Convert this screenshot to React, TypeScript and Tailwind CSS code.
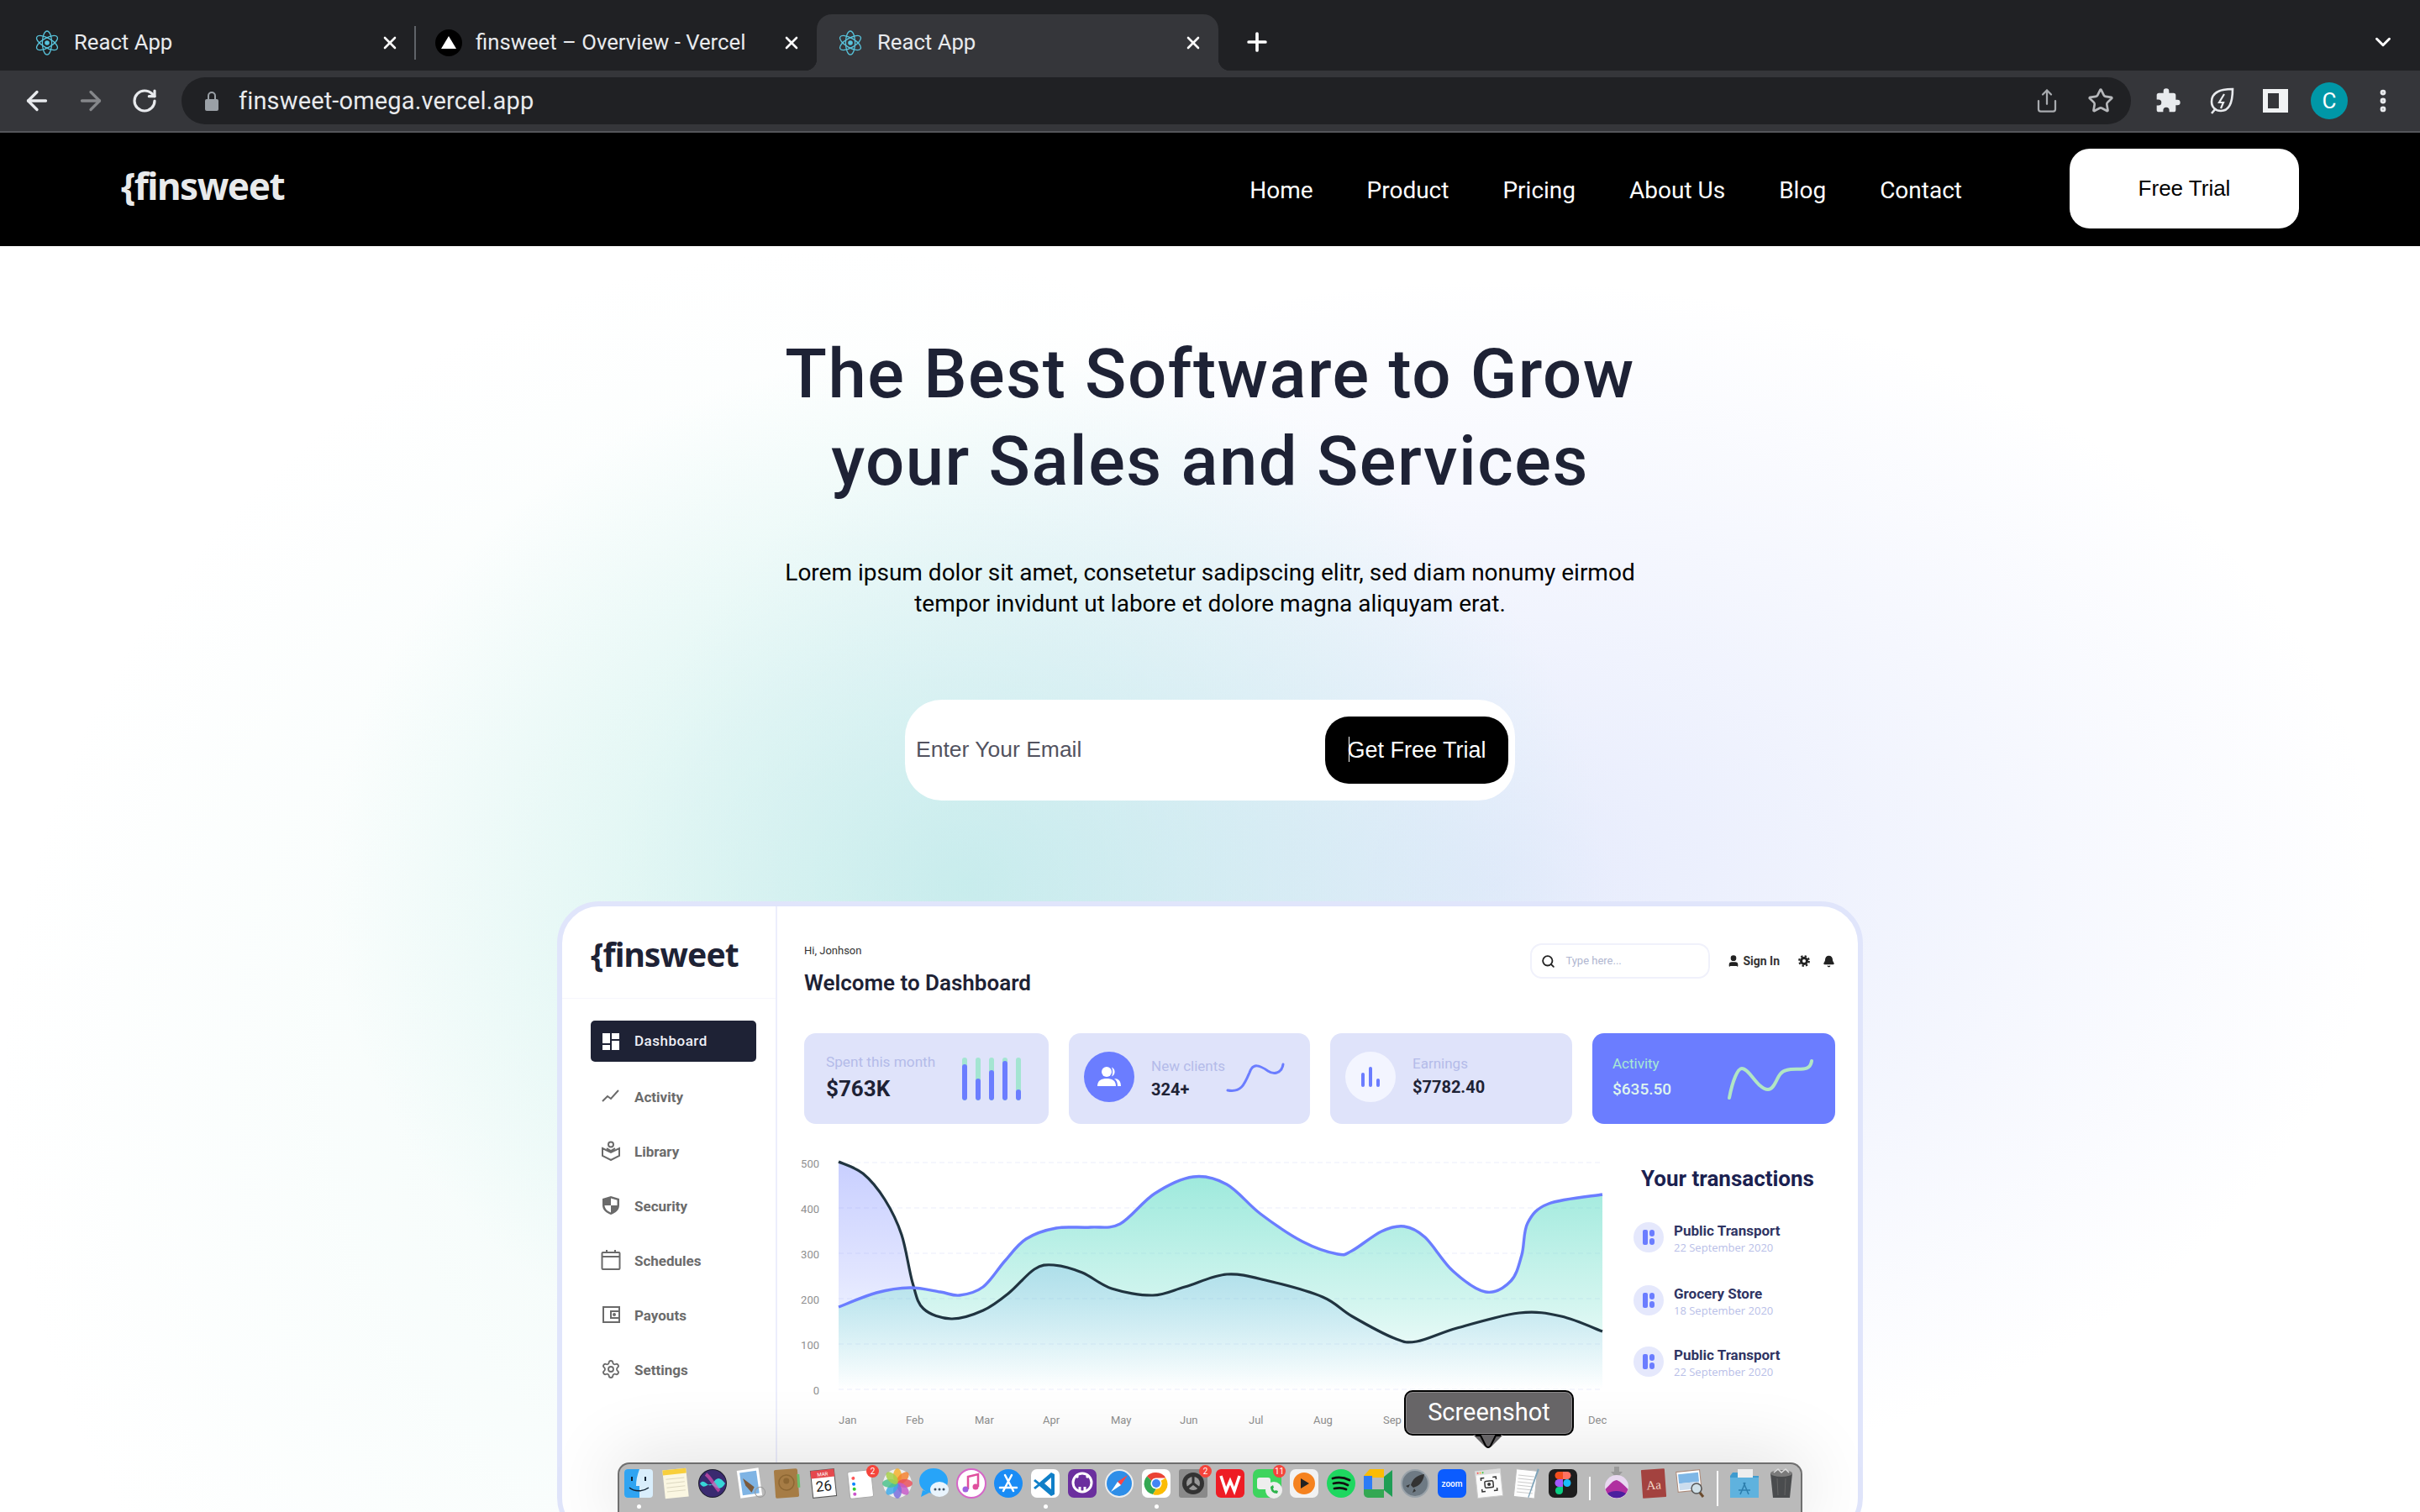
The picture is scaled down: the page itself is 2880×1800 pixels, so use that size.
import React from 'react';
import { ArrowLeft, ArrowRight, RotateCw, Share, Star, X, Plus, ChevronDown, MoreVertical, Search, Settings, Bell, User } from 'lucide-react';

// catmull-rom through the traced chart points
type Pt = [number, number];
const smooth = (pts: Pt[]) => {
  let d = `M${pts[0][0]} ${pts[0][1]}`;
  for (let i = 0; i < pts.length - 1; i++) {
    const p0 = pts[i - 1] || pts[i];
    const p1 = pts[i];
    const p2 = pts[i + 1];
    const p3 = pts[i + 2] || p2;
    d += ` C${p1[0] + (p2[0] - p0[0]) / 6} ${p1[1] + (p2[1] - p0[1]) / 6} ${p2[0] - (p3[0] - p1[0]) / 6} ${p2[1] - (p3[1] - p1[1]) / 6} ${p2[0]} ${p2[1]}`;
  }
  return d;
};

const bluePts: Pt[] = [[998,1556],[1043,1539],[1083,1533],[1119,1538],[1142,1542],[1170,1532],[1196,1501],[1221,1475],[1257,1462],[1298,1461],[1333,1457],[1374,1421],[1420,1401],[1460,1410],[1500,1445],[1550,1478],[1592,1493],[1609,1489],[1644,1466],[1671,1460],[1696,1473],[1729,1513],[1768,1538],[1798,1525],[1811,1494],[1818,1456],[1843,1433],[1907,1422]];
const darkPts: Pt[] = [[998,1383],[1027,1397],[1053,1428],[1073,1470],[1086,1527],[1099,1558],[1132,1570],[1170,1560],[1201,1539],[1231,1511],[1254,1506],[1288,1515],[1323,1534],[1372,1542],[1410,1532],[1460,1517],[1510,1525],[1574,1544],[1609,1567],[1659,1593],[1686,1597],[1734,1581],[1808,1563],[1858,1567],[1907,1585]];

const ReactIcon = () => (
  <svg width="32" height="32" viewBox="-16 -16 32 32" fill="none" stroke="#58c4dc" strokeWidth="1.3">
    <ellipse rx="14" ry="5.6" transform="rotate(90)" />
    <ellipse rx="14" ry="5.6" transform="rotate(30)" />
    <ellipse rx="14" ry="5.6" transform="rotate(150)" />
    <circle r="2.8" fill="#58c4dc" stroke="none" />
  </svg>
);

const VercelIcon = () => (
  <svg width="32" height="32" viewBox="0 0 32 32">
    <circle cx="16" cy="16" r="16" fill="#000" />
    <path d="M16 8l9 15H7z" fill="#fff" />
  </svg>
);

const Tab = ({ title, icon, active }: { title: string; icon: React.ReactNode; active?: boolean }) => (
  <div className={`relative flex h-[67px] w-[478px] items-center pl-[24px] pr-[18px] ${active ? 'rounded-t-[18px] bg-[#35363a]' : ''}`}>
    {active && (
      <>
        <div className="absolute -left-[14px] bottom-0 h-[14px] w-[14px] bg-[radial-gradient(circle_at_0_0,#202124_14px,#35363a_14.5px)]" />
        <div className="absolute -right-[14px] bottom-0 h-[14px] w-[14px] bg-[radial-gradient(circle_at_100%_0,#202124_14px,#35363a_14.5px)]" />
      </>
    )}
    {icon}
    <span className="ml-[16px] flex-1 text-[25.7px] text-[#e8eaed]">{title}</span>
    <X size={24} strokeWidth={2.6} className="text-white" />
  </div>
);

const ChromeBar = () => (
  <div className="font-['Roboto',sans-serif]">
    <div className="flex h-[84px] items-end bg-[#202124] pl-[16px]">
      <Tab title="React App" icon={<ReactIcon />} />
      <div className="-mx-[1px] mb-[13px] h-[40px] w-[2px] bg-[#5f6368]" />
      <Tab title="finsweet – Overview - Vercel" icon={<VercelIcon />} />
      <Tab title="React App" icon={<ReactIcon />} active />
      <Plus size={34} strokeWidth={2.6} className="mb-[17px] ml-[29px] text-white" />
      <ChevronDown size={30} strokeWidth={2.4} className="mb-[19px] ml-auto mr-[29px] text-white" />
    </div>
    <div className="flex h-[74px] items-start border-b-2 border-[#55565a] bg-[#35363a] pt-[8px]">
      <div className="flex h-[56px] w-[216px] items-center gap-[28px] pl-[26px]">
        <ArrowLeft size={36} strokeWidth={2.2} className="text-[#e8eaed]" />
        <ArrowRight size={36} strokeWidth={2.2} className="text-[#85878a]" />
        <RotateCw size={32} strokeWidth={2.4} className="ml-[2px] text-[#e8eaed]" />
      </div>
      <div className="flex h-[56px] w-[2320px] items-center rounded-full bg-[#202124] pl-[28px] pr-[20px]">
        <svg width="16" height="24" viewBox="0 0 16 24">
          <path d="M4 10V6a4 4 0 0 1 8 0v4" fill="none" stroke="#9aa0a6" strokeWidth="2" />
          <rect x="0" y="10" width="16" height="14" rx="2" fill="#9aa0a6" />
        </svg>
        <span className="ml-[24px] mt-[2px] text-[29px] tracking-[0.15px] text-[#e8eaed]">finsweet-omega.vercel.app</span>
        <Share size={30} strokeWidth={1.8} className="ml-auto mr-[33px] text-[#a8abaf]" />
        <Star size={32} strokeWidth={2} className="text-[#b6b8bb]" />
      </div>
      <div className="flex h-[56px] items-center pl-[12px]">
        <div className="flex w-[64px] justify-center">
          <svg width="32" height="32" viewBox="0 0 24 24" fill="#e8eaed">
            <path d="M20.5 11H19V7a2 2 0 0 0-2-2h-4V3.500a2.500 2.500 0 0 0-5 0V5H4a2 2 0 0 0-2 2v3.800h1.500a2.700 2.700 0 0 1 0 5.400H2V20a2 2 0 0 0 2 2h3.800v-1.500a2.700 2.700 0 0 1 5.400 0V22H17a2 2 0 0 0 2-2v-4h1.500a2.500 2.500 0 0 0 0-5z" />
          </svg>
        </div>
        <div className="flex w-[64px] justify-center">
          <svg width="32" height="34" viewBox="0 0 32 34" fill="none" stroke="#e8eaed" strokeWidth="2.6">
            <path d="M29 3C16 3 4 6 4 18c0 7 5 11 11 11 10 0 14-10 14-26z" />
            <path d="M4 32l5-6" />
            <path d="M19 9l-6 10h5l-3 7" strokeWidth="2.2" />
          </svg>
        </div>
        <div className="flex w-[64px] justify-center">
          <svg width="30" height="28" viewBox="0 0 30 28">
            <rect width="30" height="28" fill="#f1f3f4" />
            <rect x="6" y="5" width="13" height="18" fill="#35363a" />
          </svg>
        </div>
        <div className="flex w-[64px] justify-center">
          <div className="flex h-[44px] w-[44px] items-center justify-center rounded-full bg-[#0097a7] text-[26px] text-white">C</div>
        </div>
        <div className="flex w-[64px] justify-center">
          <MoreVertical size={34} strokeWidth={2.8} className="text-[#e8eaed]" />
        </div>
      </div>
    </div>
  </div>
);

const Header = () => (
  <div className="flex h-[135px] items-center bg-black pl-[144px] pr-[144px]">
    <span className="-mt-[10px] font-['Noto_Sans',sans-serif] text-[44px] font-bold leading-none tracking-[-1.5px] text-[#e8eaeb]">{'{finsweet'}</span>
    <div className="ml-auto mt-[2px] flex gap-[64px] font-['Roboto',sans-serif] text-[28px] text-white">
      <a>Home</a>
      <a>Product</a>
      <a>Pricing</a>
      <a>About Us</a>
      <a>Blog</a>
      <a>Contact</a>
    </div>
    <button className="-mt-[2px] ml-[128px] h-[95px] w-[273px] rounded-[24px] bg-white font-['Liberation_Sans',sans-serif] text-[26px] text-black">Free Trial</button>
  </div>
);

const Hero = () => (
  <div className="flex flex-col items-center">
    <h1 className="mt-[100px] text-center font-['Roboto',sans-serif] text-[81.5px] font-medium leading-[104px] tracking-[1.5px] text-[#1e2235]">
      The Best Software to Grow
      <br />
      your Sales and Services
    </h1>
    <p className="mt-[62px] text-center font-['Roboto',sans-serif] text-[28px] leading-[37px] text-black">
      Lorem ipsum dolor sit amet, consetetur sadipscing elitr, sed diam nonumy eirmod
      <br />
      tempor invidunt ut labore et dolore magna aliquyam erat.
    </p>
    <div className="mt-[96px] flex h-[120px] w-[726px] items-center justify-between rounded-[44px] bg-white pl-[13px] pr-[8px] font-['Liberation_Sans',sans-serif]">
      <span className="text-[26.5px] text-[#53535f]">Enter Your Email</span>
      <button className="relative h-[80px] w-[218px] rounded-[28px] bg-black text-[27px] text-white">
        Get Free Trial
        <span className="absolute left-[28px] top-[24px] h-[30px] w-[1px] bg-white" />
      </button>
    </div>
  </div>
);

const iconCls = '-mt-[4px] h-[24px] w-[24px] shrink-0';
const sideItems: { label: string; icon: React.ReactNode }[] = [
  {
    label: 'Activity',
    icon: (
      <svg className={iconCls} viewBox="0 0 24 24" fill="none" stroke="#6a6a6a" strokeWidth="2">
        <path d="M2 18l6-6 4 3 9-10" />
      </svg>
    ),
  },
  {
    label: 'Library',
    icon: (
      <svg className={iconCls} viewBox="0 0 24 24" fill="none" stroke="#6a6a6a" strokeWidth="2">
        <circle cx="12" cy="4.500" r="3" />
        <path d="M7 9l5 3 5-3M2 9l10 5 10-5v9l-10 5-10-5z" />
      </svg>
    ),
  },
  {
    label: 'Security',
    icon: (
      <svg className={iconCls} viewBox="0 0 24 24">
        <path d="M12 1l10 3v8c0 6-5 9-10 11-5-2-10-5-10-11V4z" fill="#6a6a6a" />
        <path d="M12 3.500l7.500 2.300V12H12zM12 12v8.500C8 19 4.800 16 4.500 12z" fill="#fff" />
      </svg>
    ),
  },
  {
    label: 'Schedules',
    icon: (
      <svg className={iconCls} viewBox="0 0 24 24" fill="none" stroke="#6a6a6a" strokeWidth="2">
        <rect x="1.500" y="3" width="21" height="20" rx="1" />
        <path d="M1.500 8h21M7 0v4M17 0v4" />
      </svg>
    ),
  },
  {
    label: 'Payouts',
    icon: (
      <svg className={iconCls} viewBox="0 0 24 24" fill="none" stroke="#6a6a6a" strokeWidth="2">
        <path d="M22 3H3v18h19z" />
        <path d="M22 8H12v8h10" />
        <circle cx="16" cy="12" r="1" />
      </svg>
    ),
  },
  { label: 'Settings', icon: <Settings size={24} strokeWidth={1.8} className="-mt-[4px] text-[#6a6a6a]" /> },
];

const Sidebar = () => (
  <div className="w-[256px] shrink-0 border-r-2 border-[#eceefc]">
    <div className="flex h-[110px] items-start border-b border-[#f6f6fd] pl-[34px] pt-[37px]">
      <span className="font-['Noto_Sans',sans-serif] text-[39px] font-bold leading-none tracking-[-0.9px] text-[#1e2235]">{'{finsweet'}</span>
    </div>
    <div className="pl-[34px] pt-[26px] font-['Roboto',sans-serif]">
      <div className="mb-[10px] flex h-[49px] w-[197px] items-center rounded-[5px] bg-[#1e2235] pl-[14px] text-[17px] font-medium tracking-[0.5px] text-[#eef0f6]">
        <svg className="h-[20px] w-[20px]" viewBox="0 0 20 20" fill="#fff">
          <rect width="9" height="12" />
          <rect x="11" width="9" height="7" />
          <rect y="14" width="9" height="6" />
          <rect x="11" y="9" width="9" height="11" />
        </svg>
        <span className="ml-[18px]">Dashboard</span>
      </div>
      {sideItems.map((s) => (
        <div key={s.label} className="flex h-[65px] w-[197px] items-center pl-[12px] text-[17px] font-bold text-[#6b6b6b]">
          {s.icon}
          <span className="ml-[16px]">{s.label}</span>
        </div>
      ))}
    </div>
  </div>
);

const bars = [83, 51, 70, 92, 25];

const StatCards = () => (
  <div className="mt-[44px] flex gap-[24px] font-['Roboto',sans-serif]">
    <div className="flex h-[108px] w-[291px] items-center justify-between rounded-[14px] bg-[#dfe3fa] pl-[26px] pr-[33px]">
      <div className="-mt-[4px]">
        <div className="text-[17.2px] leading-[24px] text-[#b4bbe9]">Spent this month</div>
        <div className="mt-[4px] text-[26px] font-bold leading-[32px] text-[#1e2235]">$763K</div>
      </div>
      <div className="flex gap-[10px]">
        {bars.map((h, i) => (
          <div key={i} className="relative h-[51px] w-[6px] overflow-hidden rounded-full bg-[#a4e5d2]">
            <div className="absolute bottom-0 w-full rounded-full bg-[#6b7dff]" style={{ height: `${h}%` }} />
          </div>
        ))}
      </div>
    </div>
    <div className="flex h-[108px] w-[287px] items-center rounded-[14px] bg-[#dfe3fa] pl-[18px]">
      <div className="-mt-[5px] flex h-[60px] w-[60px] items-center justify-center rounded-full bg-[#6b7dff]">
        <svg width="30" height="26" viewBox="0 0 30 26" fill="#fff">
          <circle cx="12" cy="7" r="6" />
          <path d="M1 24c0-7 5-9 11-9s11 2 11 9z" />
          <path d="M18 1.500a6 6 0 0 1 0 11c1.500-3 1.500-8 0-11zM21 15c5 0 8 3 8 9h-4c0-4-1-7-4-9z" />
        </svg>
      </div>
      <div className="ml-[20px]">
        <div className="text-[17px] leading-[24px] text-[#b4bbe9]">New clients</div>
        <div className="mt-[2px] text-[20px] font-bold leading-[28px] text-[#1e2235]">324+</div>
      </div>
      <svg className="ml-[1px]" width="70" height="42" viewBox="0 0 70 42" fill="none" stroke="#6b7dff" strokeWidth="3" strokeLinecap="round">
        <path d="M2 35C18 38 22 28 28 14C32 2 40 5 50 12C56 16 66 16 68 4" />
      </svg>
    </div>
    <div className="flex h-[108px] w-[288px] items-center rounded-[14px] bg-[#dfe3fa] pl-[18px]">
      <div className="-mt-[5px] flex h-[60px] w-[60px] items-center justify-center rounded-full bg-[#f3f5ff]">
        <svg width="22" height="24" viewBox="0 0 22 24" fill="#6b7dff">
          <rect x="0" y="7" width="4" height="17" rx="2" />
          <rect x="9" y="0" width="4" height="24" rx="2" />
          <rect x="18" y="14" width="4" height="10" rx="2" />
        </svg>
      </div>
      <div className="-mt-[7px] ml-[20px]">
        <div className="text-[17px] leading-[24px] text-[#b4bbe9]">Earnings</div>
        <div className="mt-[2px] text-[20px] font-bold leading-[28px] text-[#1e2235]">$7782.40</div>
      </div>
    </div>
    <div className="flex h-[108px] w-[289px] items-center justify-between rounded-[14px] bg-[#6b7dff] pl-[24px] pr-[24px]">
      <div className="-mt-[3px]">
        <div className="text-[17px] leading-[24px] text-[#a7e8d4]">Activity</div>
        <div className="mt-[5px] text-[19px] font-medium leading-[28px] text-[#dff5ee]">$635.50</div>
      </div>
      <svg width="106" height="56" viewBox="0 0 106 56" fill="none" stroke="#b1e6c4" strokeWidth="4" strokeLinecap="round">
        <path d="M4 51C8 30 14 16 19 16C28 16 38 41 50 41C60 41 60 20 72 18C84 14 100 22 102 7" />
      </svg>
    </div>
  </div>
);

const Chart = () => {
  const base = 'L1907 1654 L998 1654 Z';
  const months: [string, number][] = [['Jan', 998], ['Feb', 1078], ['Mar', 1160], ['Apr', 1241], ['May', 1322], ['Jun', 1404], ['Jul', 1486], ['Aug', 1563], ['Sep', 1646], ['Dec', 1890]];
  return (
    <svg width="985" height="340" viewBox="947 1370 985 340" className="-ml-[10px] shrink-0 font-['Roboto',sans-serif]">
      <defs>
        <linearGradient id="fillDark" gradientUnits="userSpaceOnUse" x1="0" y1="1383" x2="0" y2="1654">
          <stop offset="0" stopColor="#6b7dff" stopOpacity="0.37" />
          <stop offset="0.5" stopColor="#6b7dff" stopOpacity="0.2" />
          <stop offset="1" stopColor="#6b9dff" stopOpacity="0" />
        </linearGradient>
        <linearGradient id="fillBlue" gradientUnits="userSpaceOnUse" x1="0" y1="1400" x2="0" y2="1654">
          <stop offset="0" stopColor="#4fd8c0" stopOpacity="0.55" />
          <stop offset="0.6" stopColor="#4fd8c0" stopOpacity="0.25" />
          <stop offset="1" stopColor="#4fd8c0" stopOpacity="0" />
        </linearGradient>
      </defs>
      {[1384, 1438, 1492, 1546, 1600, 1654].map((y, i) => (
        <g key={y}>
          <line x1="998" x2="1907" y1={y} y2={y} stroke="#ebedfb" strokeWidth="1" strokeDasharray="6 4" />
          <text x="975" y={y + 6} textAnchor="end" fontSize="13" fill="#8f8f8f">{500 - i * 100}</text>
        </g>
      ))}
      <path d={`${smooth(darkPts)} ${base}`} fill="url(#fillDark)" />
      <path d={`${smooth(bluePts)} ${base}`} fill="url(#fillBlue)" />
      <path d={smooth(darkPts)} fill="none" stroke="#203440" strokeWidth="3.2" />
      <path d={smooth(bluePts)} fill="none" stroke="#6b7dff" strokeWidth="3.4" />
      {months.map(([m, x]) => (
        <text key={m} x={x} y="1695" fontSize="13" fill="#8f8f8f">{m}</text>
      ))}
    </svg>
  );
};

const txns = [
  { title: 'Public Transport', date: '22 September 2020', mt: 'mt-[34px]' },
  { title: 'Grocery Store', date: '18 September 2020', mt: 'mt-[35px]' },
  { title: 'Public Transport', date: '22 September 2020', mt: 'mt-[33px]' },
];

const Transactions = () => (
  <div className="ml-[12px] font-['Roboto',sans-serif]">
    <div className="ml-[9px] mt-[17px] text-[26px] font-bold leading-[32px] text-[#1b2150]">Your transactions</div>
    {txns.map((t, i) => (
      <div key={i} className={`flex h-[40px] items-center ${t.mt}`}>
        <div className="flex h-[36px] w-[36px] items-center justify-center rounded-full bg-[#e5e8fc]">
          <svg width="14" height="18" viewBox="0 0 14 18" fill="#6b7dff">
            <rect width="6" height="18" rx="2" />
            <rect x="8" width="6" height="8" rx="3" />
            <rect x="8" y="10" width="6" height="8" rx="3" />
          </svg>
        </div>
        <div className="ml-[12px] pt-[3px]">
          <div className="text-[17px] font-bold leading-[20px] text-[#2f3463]">{t.title}</div>
          <div className="font-['Open_Sans',sans-serif] text-[13px] leading-[20px] text-[#b9c0e8]">{t.date}</div>
        </div>
      </div>
    ))}
  </div>
);

const DashboardMock = () => (
  <div className="mt-[120px] h-[760px] w-[1554px] shrink-0 self-center rounded-[50px] border-[6px] border-[#e0e5fb] bg-white">
    <div className="flex h-full">
      <Sidebar />
      <div className="flex-1 pl-[32px] pr-[27px] pt-[44px]">
        <div className="flex items-start justify-between font-['Roboto',sans-serif]">
          <div>
            <div className="text-[13px] leading-[18px] text-[#333]">Hi, Jonhson</div>
            <div className="mt-[13px] text-[26px] font-semibold leading-[32px] text-[#1e2235]">Welcome to Dashboard</div>
          </div>
          <div className="flex items-center">
            <div className="flex h-[42px] w-[214px] items-center rounded-[14px] border-2 border-[#f0f1fb] pl-[11px]">
              <Search size={17} strokeWidth={2.6} className="text-[#222]" />
              <span className="ml-[12px] text-[13px] text-[#b0b6d0]">Type here...</span>
            </div>
            <User size={16} fill="#222" className="ml-[20px] text-[#222]" />
            <span className="ml-[3px] text-[14px] font-bold text-[#333]">Sign In</span>
            <svg className="ml-[22px]" width="14" height="14" viewBox="0 0 14 14" fill="none" stroke="#222">
              <circle cx="7" cy="7" r="3.500" strokeWidth="3" />
              <circle cx="7" cy="7" r="5.800" strokeWidth="2.200" strokeDasharray="2.300 2.250" />
            </svg>
            <Bell size={15} fill="#222" className="ml-[15px] text-[#222]" />
          </div>
        </div>
        <StatCards />
        <div className="mt-[32px] flex">
          <Chart />
          <Transactions />
        </div>
      </div>
    </div>
  </div>
);

// dock tile drawings, all on a 40x40 box
const dockIcons: { key: string; dot?: boolean; badge?: string; el: React.ReactNode }[] = [
  { key: 'finder', dot: true, el: <><rect x="3" y="3" width="34" height="34" rx="4" fill="#d9eefc" /><path d="M3 7a4 4 0 0 1 4-4h14c-3 8-4 14-4 20h4v14H7a4 4 0 0 1-4-4z" fill="#2fa4f2" /><path d="M9 25c6 5 16 5 23 0" fill="none" stroke="#123" strokeWidth="1.500" /><path d="M12 12v5M28 12v5" stroke="#123" strokeWidth="2" /></> },
  { key: 'notes', el: <g transform="rotate(-6 20 20)"><rect x="6" y="3" width="28" height="34" fill="#fbf7e2" /><rect x="6" y="3" width="28" height="6" fill="#f8cf3c" /><path d="M9 14h22M9 19h22M9 24h22M9 29h22" stroke="#ddd8c0" /></g> },
  { key: 'siri', el: <><circle cx="20" cy="20" r="17" fill="#1c1c2c" /><circle cx="20" cy="20" r="16" fill="#3a2a70" /><path d="M5 20c6-8 10 8 15 0s9-8 15 0c-5 9-10 6-15 2s-10 7-15-2z" fill="#37d6d8" /><path d="M12 9c6 4 10 14 16 20" stroke="#e04fb0" strokeWidth="4" opacity=".7" /></> },
  { key: 'mail', el: <g transform="rotate(-8 20 20)"><rect x="7" y="3" width="26" height="33" fill="#fff" /><rect x="10" y="6" width="20" height="27" fill="#7fb4e4" /><path d="M13 13l12 12-4 6-6-9z" fill="#7b5a3c" /><circle cx="31" cy="32" r="6" fill="none" stroke="#999" /></g> },
  { key: 'contacts', el: <g transform="rotate(-4 20 20)"><rect x="6" y="3" width="28" height="34" rx="2" fill="#a67c45" /><rect x="33" y="10" width="3" height="16" fill="#6bbf6b" /><circle cx="20" cy="19" r="9" fill="none" stroke="#8d6733" strokeWidth="1.500" /><circle cx="20" cy="17" r="3.500" fill="#8d6733" /></g> },
  { key: 'calendar', el: <g transform="rotate(-6 20 20)"><rect x="6" y="4" width="28" height="32" fill="#fff" stroke="#555" /><rect x="6" y="4" width="28" height="9" fill="#e5484d" /><text x="20" y="11" textAnchor="middle" fontSize="6" fill="#fff" fontFamily="Roboto">MAR</text><text x="20" y="29" textAnchor="middle" fontSize="17" fill="#222" fontFamily="Roboto">26</text></g> },
  { key: 'reminders', badge: '2', el: <g transform="rotate(-6 20 20)"><rect x="6" y="5" width="28" height="32" rx="2" fill="#fff" stroke="#aaa" /><circle cx="12" cy="13" r="2" fill="#f55" /><circle cx="12" cy="20" r="2" fill="#0a84ff" /><circle cx="12" cy="26" r="2" fill="#3c3" /><circle cx="12" cy="32" r="2" fill="#c5c" /></g> },
  { key: 'photos', el: <><circle cx="20" cy="20" r="17" fill="#eee" />{['#f5b02e', '#f38230', '#e8505b', '#c45bc7', '#7a6fdc', '#3fa9e8', '#4cc28c', '#a6d04a'].map((c, i) => <ellipse key={c} cx="20" cy="11" rx="5" ry="9" fill={c} opacity=".85" transform={`rotate(${i * 45} 20 20)`} />)}</> },
  { key: 'messages', el: <><ellipse cx="19" cy="17" rx="17" ry="15" fill="#27a4f8" /><path d="M6 28l-2 8 10-5z" fill="#27a4f8" /><ellipse cx="26" cy="27" rx="11" ry="9" fill="#e9f4fd" /><circle cx="21" cy="27" r="1.500" fill="#456" /><circle cx="26" cy="27" r="1.500" fill="#456" /><circle cx="31" cy="27" r="1.500" fill="#456" /></> },
  { key: 'music', el: <><circle cx="20" cy="20" r="17" fill="#fff" stroke="#d666c8" strokeWidth="2" /><path d="M16 27V12l12-3v15" fill="none" stroke="#e0509e" strokeWidth="2.500" /><circle cx="13" cy="27" r="3.500" fill="#a062e0" /><circle cx="25" cy="24" r="3.500" fill="#e0509e" /></> },
  { key: 'appstore', el: <><circle cx="20" cy="20" r="17" fill="#1a8cf5" /><path d="M14 29l10-19M26 29L16 10M10 25h20" stroke="#fff" strokeWidth="2.500" strokeLinecap="round" /></> },
  { key: 'vscode', dot: true, el: <><rect x="3" y="3" width="34" height="34" rx="7" fill="#fff" /><path d="M27 7l-14 12-5-4-2 2 5 4-5 4 2 2 5-4 14 12 4-2V9z" fill="#0f7fc8" /><path d="M27 13l-8 7 8 7z" fill="#fff" /></> },
  { key: 'github', el: <><rect x="3" y="3" width="34" height="34" rx="7" fill="#6b2f9e" /><circle cx="20" cy="19" r="11" fill="none" stroke="#fff" strokeWidth="3" /><path d="M12 10l3 3M28 10l-3 3M17 30v-6M23 30v-6" stroke="#fff" strokeWidth="3" /></> },
  { key: 'safari', el: <><circle cx="20" cy="20" r="17" fill="#eee" /><circle cx="20" cy="20" r="15" fill="#2e8ee8" /><path d="M30 10l-12 8 4 4z" fill="#f44" /><path d="M10 30l12-8-4-4z" fill="#fff" /></> },
  { key: 'chrome', dot: true, el: <><rect x="3" y="3" width="34" height="34" rx="7" fill="#fff" /><path d="M20 7a13 13 0 0 1 11.300 6.500H20a6.500 6.500 0 0 0-5.600 3.200L9 11.500A13 13 0 0 1 20 7z" fill="#ea4335" /><path d="M9 11.500l5.400 5.200a6.500 6.500 0 0 0 5.600 9.800L16 33A13 13 0 0 1 9 11.500z" fill="#34a853" /><path d="M31.300 13.500A13 13 0 0 1 16 33l4-6.500a6.500 6.500 0 0 0 5.600-9.800z" fill="#fbbc04" /><circle cx="20" cy="20" r="5" fill="#4285f4" /></> },
  { key: 'prefs', badge: '2', el: <><rect x="3" y="3" width="34" height="34" rx="3" fill="#8a8a8a" /><circle cx="20" cy="20" r="13" fill="#333" /><circle cx="20" cy="20" r="8" fill="#999" /><path d="M20 20V9M20 20l-9 7M20 20l9 7" stroke="#333" strokeWidth="3" /></> },
  { key: 'wps', el: <><rect x="3" y="3" width="34" height="34" rx="6" fill="#ee1c25" /><path d="M9 11l6 18 5-12 5 12 6-18" fill="none" stroke="#fff" strokeWidth="3.500" /></> },
  { key: 'facetime', badge: '11', el: <><rect x="3" y="3" width="34" height="34" rx="7" fill="#3ed45e" /><rect x="8" y="13" width="16" height="14" rx="3" fill="#eee" /><circle cx="28" cy="28" r="10" fill="#eee" /><path d="M24 24c0 5 3 8 8 8l1-3-3-1-1 1c-1-1-2-2-2-3l1-1-1-3z" fill="#2bb34a" /></> },
  { key: 'vlc', el: <><rect x="3" y="3" width="34" height="34" rx="7" fill="#f2f2f2" /><circle cx="20" cy="20" r="13" fill="#f5821f" /><path d="M16 14l10 6-10 6z" fill="#222" /></> },
  { key: 'spotify', el: <><circle cx="20" cy="20" r="17" fill="#1ed760" /><path d="M10 14c7-2 14-1 20 2M11 20c6-1.500 12-1 17 2M12 26c5-1 10-1 14 1" fill="none" stroke="#111" strokeWidth="2.800" strokeLinecap="round" /></> },
  { key: 'meet', el: <><path d="M10 3h17v10H13v14H3V11z" fill="#f9bc06" /><path d="M3 11h10v16H3z" fill="#2d7cf6" /><path d="M3 27h24v10H8a5 5 0 0 1-5-5z" fill="#34a853" /><path d="M27 12v16l10 8V4z" fill="#1f9e55" /><path d="M27 3v10h-14l0-10z" fill="#fbbc04" /></> },
  { key: 'launchpad', el: <><circle cx="20" cy="20" r="17" fill="#9aa3aa" /><circle cx="20" cy="20" r="15" fill="#6e7a84" /><path d="M31 9c-9 1-14 6-16 13l3 3c7-2 12-7 13-16zM14 21l-5 2 3 2zM19 26l-2 5 4-2z" fill="#333" /></> },
  { key: 'zoom', el: <><rect x="3" y="3" width="34" height="34" rx="7" fill="#0b5cff" /><text x="20" y="24" textAnchor="middle" fontSize="10" fill="#fff" fontFamily="Roboto" fontWeight="500">zoom</text></> },
  { key: 'screenshot', el: <g transform="rotate(-6 20 20)"><rect x="5" y="4" width="30" height="32" fill="#fbfbfb" stroke="#ccc" /><rect x="5" y="4" width="30" height="5" fill="#ddd" /><circle cx="8" cy="6.500" r="1" fill="#f55" /><circle cx="11" cy="6.500" r="1" fill="#fb3" /><circle cx="14" cy="6.500" r="1" fill="#3c3" /><path d="M11 16v-3h4M25 13h4v3M29 26v3h-4M15 29h-4v-3" fill="none" stroke="#333" strokeWidth="1.500" /><rect x="15" y="17" width="10" height="8" rx="1.500" fill="none" stroke="#333" strokeWidth="1.500" /><circle cx="20" cy="21" r="2" fill="#333" /></g> },
  { key: 'textedit', el: <g transform="rotate(6 20 20)"><rect x="7" y="4" width="25" height="33" fill="#fdfdfd" stroke="#bbb" /><path d="M10 11h19M10 15h19M10 19h19M10 23h19M10 27h19M10 31h19" stroke="#ccc" /><path d="M32 1l2 1-9 35-1-1z" fill="#7da2b8" /></g> },
  { key: 'figma', el: <><rect x="3" y="3" width="34" height="34" rx="7" fill="#1e1e1e" /><path d="M15 6h5v9h-5a4.500 4.500 0 0 1 0-9z" fill="#f24e1e" /><path d="M20 6h5a4.500 4.500 0 0 1 0 9h-5z" fill="#ff7262" /><path d="M15 15h5v9h-5a4.500 4.500 0 0 1 0-9z" fill="#a259ff" /><circle cx="25" cy="19.500" r="4.500" fill="#1abcfe" /><path d="M15 24h5v4.500a4.500 4.500 0 1 1-5-4.500z" fill="#0acf83" /></> },
  { key: 'sep1', el: null },
  { key: 'monterey', el: <><path d="M17 0h6v6h4l-7 8-7-8h4z" fill="#9a9a9a" /><circle cx="20" cy="24" r="14" fill="#e8d8f0" /><path d="M6.500 27c6-6 8-10 13.500-11 5 2 9 6 13.500 11A14 14 0 0 1 6.500 27z" fill="#b02fa0" /><path d="M9 32c5-4 16-4 22 0a14 14 0 0 1-22 0z" fill="#4b1f9e" /></> },
  { key: 'dictionary', el: <g transform="rotate(-4 20 20)"><rect x="6" y="3" width="28" height="34" rx="1" fill="#a3423f" /><text x="20" y="27" textAnchor="middle" fontSize="15" fill="#f3d9c9" fontFamily="Liberation Serif">Aa</text></g> },
  { key: 'preview', el: <><g transform="rotate(-6 18 18)"><rect x="4" y="5" width="28" height="24" fill="#fff" stroke="#a87" /><rect x="6" y="8" width="24" height="11" fill="#7fb7e6" /><rect x="6" y="19" width="24" height="8" fill="#cde" /></g><circle cx="27" cy="26" r="6" fill="#cfe0e8" stroke="#555" strokeWidth="1.500" /><path d="M31 31l4 5" stroke="#6b4a2c" strokeWidth="3" /></> },
  { key: 'sep2', el: null },
  { key: 'apps', el: <><path d="M3 11l3-4h12l3 4h16v26H3z" fill="#3e9bcf" /><rect x="12" y="3" width="18" height="10" fill="#eee" /><rect x="3" y="13" width="34" height="24" fill="#5fb2de" /><path d="M15 33l6-14M25 33l-6-14M13 28h14" stroke="#2e7fae" strokeWidth="1.600" /></> },
  { key: 'trash', el: <><path d="M7 8h26l-3 29H10z" fill="#4a4c4e" /><ellipse cx="20" cy="8" rx="13" ry="4" fill="#7b7b7b" /><path d="M11 7l5-4 4 4 5-4 4 4" stroke="#ddd" fill="none" strokeWidth="1.500" /><path d="M15 14l1 20M25 14l-1 20" stroke="#666" /></> },
];

const Dock = () => (
  <div className="absolute bottom-0 left-[735px] flex h-[59px] w-[1410px] items-start gap-[4px] rounded-t-[14px] border-x-2 border-t-2 border-[#6f6f6f] bg-[#bababa] pl-[3px] pt-[3px] shadow-[0_0_90px_rgba(0,0,0,0.16)]">
    {dockIcons.map((d) =>
      d.el === null ? (
        <div key={d.key} className="flex w-[16px] justify-center">
          <div className={`w-[2px] bg-white ${d.key === 'sep1' ? 'mt-[12px] h-[28px]' : 'mt-[5px] h-[42px]'}`} />
        </div>
      ) : (
        <div key={d.key} className="relative flex w-[40px] flex-col items-center">
          <svg width="40" height="40" viewBox="0 0 40 40">{d.el}</svg>
          {d.dot && <div className="mt-[5px] h-[5px] w-[5px] rounded-full bg-white" />}
          {d.badge && (
            <div className="absolute -right-[2px] -top-[2px] flex h-[15px] min-w-[15px] items-center justify-center rounded-full bg-[#f5443b] font-['Roboto',sans-serif] text-[10px] text-white">{d.badge}</div>
          )}
        </div>
      ),
    )}
  </div>
);

const ScreenshotTip = () => (
  <div className="absolute left-[1671px] top-[1655px]">
    <div className="flex h-[54px] w-[202px] items-center justify-center rounded-[10px] border-2 border-black bg-[#676567] font-['Roboto',sans-serif] text-[29px] text-white shadow-[inset_0_0_0_1px_#8a888a]">Screenshot</div>
    <svg className="absolute left-[80px] top-[51px]" width="40" height="20" viewBox="0 0 40 20">
      <path d="M2 2h36l-14 14q-4 4-8 0z" fill="#676567" />
      <path d="M5 3h6l6 12q3 4 6 0l6-12h6" fill="none" stroke="#000" strokeWidth="2" />
    </svg>
  </div>
);

export default function App() {
  return (
    <div className="relative h-[1800px] w-[2880px] overflow-hidden bg-white">
      <ChromeBar />
      <Header />
      <div className="relative">
        {/* soft glow behind the hero */}
        <div className="absolute inset-0 bg-[radial-gradient(ellipse_760px_640px_at_1150px_760px,rgba(150,225,218,0.42),transparent),radial-gradient(ellipse_1050px_720px_at_1780px_760px,rgba(205,215,250,0.5),transparent),radial-gradient(ellipse_1000px_1000px_at_1000px_1000px,rgba(205,240,232,0.3),transparent)]" />
        <div className="relative flex flex-col">
          <Hero />
          <DashboardMock />
        </div>
      </div>
      <Dock />
      <ScreenshotTip />
    </div>
  );
}
